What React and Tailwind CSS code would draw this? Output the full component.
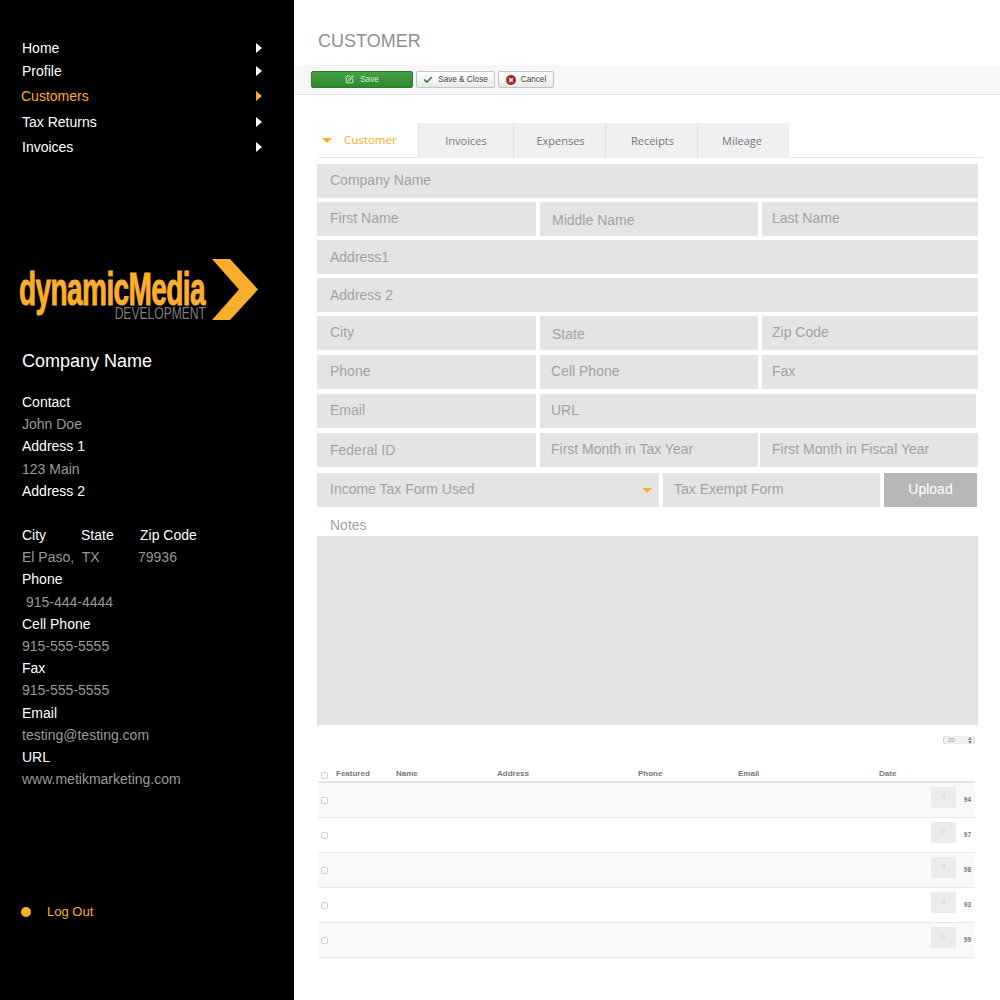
import { Check, SquarePen } from 'lucide-react'

const nav = [
  ['Home', 'mt-[36px]', 'text-white'],
  ['Profile', 'mt-[-1px]', 'text-white'],
  ['Customers', 'mt-[1px]', 'text-[#fbad2c]'],
  ['Tax Returns', 'mt-[2px]', 'text-white'],
  ['Invoices', 'mt-[1px]', 'text-white'],
]

const details = [
  ['Contact', 1], ['John Doe', 0], ['Address 1', 1], ['123 Main', 0], ['Address 2', 1],
]

const details2 = [
  ['Phone', 1], ['\u00a0915-444-4444', 0], ['Cell Phone', 1], ['915-555-5555', 0], ['Fax', 1],
  ['915-555-5555', 0], ['Email', 1], ['testing@testing.com', 0], ['URL', 1], ['www.metikmarketing.com', 0],
]

const tabs = [
  ['Invoices', 'w-[95px]'],
  ['Expenses', 'w-[92px] pl-[2px]'],
  ['Receipts', 'w-[92px] pl-[2px]'],
  ['Mileage', 'w-[92px] pr-[3px]'],
]

const rows = [94, 97, 98, 93, 99]

function Field({ label, className = '' }) {
  return (
    <div className={`h-[34px] bg-[#e4e4e4] text-[14px] text-[#a3a3a3] ${className}`}>
      {label}
    </div>
  )
}

function Caret({ className = '' }) {
  return <div className={`h-0 w-0 border-x-[5px] border-t-[5px] border-x-transparent border-t-[#fbab2d] ${className}`} />
}

function Box() {
  return <div className="h-[7px] w-[7px] rounded-[2px] border border-[#cfcfcf] bg-white" />
}

export default function App() {
  return (
    <div className="flex min-h-[1000px] bg-white font-['Liberation_Sans',sans-serif]">
      <aside className="flex h-[1000px] w-[294px] shrink-0 flex-col bg-black">
        <nav className="pl-[22px] pr-[32px]">
          {nav.map(([label, mt, color]) => (
            <div key={label} className={`flex h-[24px] items-center justify-between text-[14px] ${mt} ${color}`}>
              <span className={label === 'Customers' ? '-ml-[1px]' : ''}>{label}</span>
              <div className={`mt-[-1px] h-0 w-0 border-y-[5px] border-l-[6px] border-y-transparent ${label === 'Customers' ? 'border-l-[#fbad2c]' : 'border-l-white'}`} />
            </div>
          ))}
        </nav>

        <div className="mt-[100px] flex h-[70px] pl-[19px]">
          <div className="w-[187px]">
            <div className="h-[46px] origin-top-left scale-x-[0.61] whitespace-nowrap pt-[10px] text-[46px] font-bold leading-[40px] tracking-[-1px] text-[#fbad2c] [-webkit-text-stroke:1px_#fbad2c]">dynamicMedia</div>
            <div className="mt-[2px] text-right text-[16px] leading-[14px] text-[#7d7d7d]">
              <span className="inline-block origin-right scale-x-[0.755]">DEVELOPMENT</span>
            </div>
          </div>
          <svg width="46" height="62" viewBox="0 0 46 62" className="ml-[6px] shrink-0">
            <path d="M0 0H18L46 30.5 18 61H0L27 30.5Z" fill="#fbad2c" />
          </svg>
        </div>

        <div className="mt-[20px] pl-[22px] text-[18px] leading-[24px] text-white">Company Name</div>

        <div className="mt-[18px] pl-[22px] text-[14px] leading-[22.2px]">
          {details.map(([t, w]) => (
            <div key={t} className={w ? 'text-white' : 'text-[#999999]'}>{t}</div>
          ))}
          <div className="mt-[22px] flex text-white">
            <span className="w-[59px]">City</span>
            <span className="w-[59px]">State</span>
            <span>Zip Code</span>
          </div>
          <div className="flex text-[#999999]">
            <span className="w-[116px]">El Paso,&nbsp; TX</span>
            <span>79936</span>
          </div>
          {details2.map(([t, w], i) => (
            <div key={i} className={w ? 'text-white' : 'text-[#999999]'}>{t}</div>
          ))}
        </div>

        <div className="ml-[21px] mt-[112px] flex items-center text-[13px] leading-[20px] text-[#fbad2c]">
          <div className="h-[10px] w-[10px] rounded-full bg-[#fbad2c]" />
          <span className="ml-[16px]">Log Out</span>
        </div>
      </aside>

      <main className="min-w-0 flex-1">
        <h1 className="pl-[24px] pt-[30px] text-[18px] leading-[22px] text-[#8f8f8f]">CUSTOMER</h1>

        <div className="mt-[13px] flex h-[30px] items-start gap-[3px] border-b border-[#e6e6e6] bg-[#f7f7f7] pl-[17px] pt-[6px] text-[8.2px] leading-[15px] text-[#444444]">
          <div className="flex h-[17px] w-[102px] items-center justify-center gap-[6px] rounded-[2px] border border-[#2a7a2a] bg-gradient-to-b from-[#44a044] to-[#2e8a2e] text-[#d9ecd9]">
            <SquarePen size={9} strokeWidth={2.5} />
            <span>Save</span>
          </div>
          <div className="flex h-[17px] w-[79px] items-center justify-center gap-[5px] rounded-[2px] border border-[#c4c4c4] bg-gradient-to-b from-white to-[#e9e9e9]">
            <Check size={10} strokeWidth={4} className="text-[#2d862d]" />
            <span>Save &amp; Close</span>
          </div>
          <div className="flex h-[17px] w-[56px] items-center justify-center gap-[5px] rounded-[2px] border border-[#c4c4c4] bg-gradient-to-b from-white to-[#e9e9e9]">
            <svg width="10" height="10" viewBox="0 0 10 10">
              <circle cx="5" cy="5" r="5" fill="#a8232a" />
              <path d="M3.2 3.2L6.8 6.8M6.8 3.2L3.2 6.8" stroke="#fff" strokeWidth="1.4" />
            </svg>
            <span>Cancel</span>
          </div>
        </div>

        <div className="ml-[24px] mr-[17px] mt-[28px] flex h-[35px] border-b border-[#e6e6e6] font-['Open_Sans',sans-serif] text-[11px]">
          <div className="flex w-[100px] items-start pl-[4px] pt-[8px] text-[11.5px] text-[#fbab2d]">
            <Caret className="mt-[7px]" />
            <span className="ml-[12px] leading-[17px]">Customer</span>
          </div>
          {tabs.map(([t, w]) => (
            <div key={t} className={`flex h-[35px] items-center justify-center border-l border-[#dddee0] bg-[#eff0f2] pt-[2px] text-[#777777] ${w}`}>{t}</div>
          ))}
        </div>

        <div className="ml-[23px] mt-[6px] flex w-[661px] flex-col">
          <Field label="Company Name" className="pl-[13px] leading-[32px]" />
          <div className="mt-[4px] flex gap-[4px]">
            <Field label="First Name" className="w-[219px] pl-[13px] leading-[32px]" />
            <Field label="Middle Name" className="w-[218px] pl-[12px] leading-[36px]" />
            <Field label="Last Name" className="w-[216px] pl-[10px] leading-[32px]" />
          </div>
          <Field label="Address1" className="mt-[4px] pl-[13px] leading-[34px]" />
          <Field label="Address 2" className="mt-[4px] pl-[13px] leading-[34px]" />
          <div className="mt-[4px] flex gap-[4px]">
            <Field label="City" className="w-[219px] pl-[13px] leading-[32px]" />
            <Field label="State" className="w-[218px] pl-[12px] leading-[36px]" />
            <Field label="Zip Code" className="w-[216px] pl-[10px] leading-[32px]" />
          </div>
          <div className="mt-[5px] flex gap-[4px]">
            <Field label="Phone" className="w-[219px] pl-[13px] leading-[32px]" />
            <Field label="Cell Phone" className="w-[218px] pl-[11px] leading-[32px]" />
            <Field label="Fax" className="w-[216px] pl-[10px] leading-[32px]" />
          </div>
          <div className="mt-[5px] flex gap-[4px]">
            <Field label="Email" className="w-[219px] pl-[13px] leading-[32px]" />
            <Field label="URL" className="w-[436px] pl-[11px] leading-[32px]" />
          </div>
          <div className="mt-[5px] flex gap-[4px]">
            <Field label="Federal ID" className="w-[219px] pl-[13px] leading-[34px]" />
            <Field label="First Month in Tax Year" className="w-[218px] pl-[11px] leading-[32px]" />
            <Field label="First Month in Fiscal Year" className="ml-[-2px] w-[218px] pl-[12px] leading-[32px]" />
          </div>
          <div className="mt-[6px] flex gap-[4px]">
            <div className="flex h-[34px] w-[342px] justify-between bg-[#e4e4e4] pl-[13px] pr-[7px] text-[14px] leading-[32px] text-[#a3a3a3]">
              <span>Income Tax Form Used</span>
              <Caret className="mt-[15px]" />
            </div>
            <Field label="Tax Exempt Form" className="w-[217px] pl-[11px] leading-[32px]" />
            <div className="h-[34px] w-[93px] bg-[#b7b7b7] text-center text-[14px] leading-[32px] text-white">Upload</div>
          </div>
          <div className="mt-[10px] pl-[13px] text-[14px] leading-[16px] text-[#a3a3a3]">Notes</div>
          <div className="mt-[3px] h-[189px] border-2 border-[#e2e2e2] bg-[#e4e4e4]" />
        </div>

        <div className="ml-[649px] mt-[11px] flex h-[8px] w-[32px] items-center justify-between rounded-[3px] border-x border-[#c9c9c9] bg-[#efefef] px-[2px] text-[6px] leading-[8px] text-[#999999]">
          <span className="pl-[2px]">20</span>
          <svg width="4" height="7" viewBox="0 0 4 7" className="shrink-0">
            <path d="M2 0L4 3H0ZM0 4H4L2 7Z" fill="#888888" />
          </svg>
        </div>

        <div className="ml-[24px] mt-[24px] w-[657px] text-[8px] font-bold text-[#777777]">
          <div className="grid h-[15px] grid-cols-[18px_60px_101px_141px_100px_141px_1fr] items-center border-b-2 border-[#e6e6e6] pb-[2px]">
            <div className="pl-[3px] pt-[2px]"><Box /></div>
            <span>Featured</span>
            <span>Name</span>
            <span>Address</span>
            <span>Phone</span>
            <span>Email</span>
            <span>Date</span>
          </div>
          {rows.map((n, i) => (
            <div key={n} className={`flex h-[35px] items-center justify-between border-b border-[#e9e9e9] pl-[3px] pr-[4px] ${i % 2 === 0 ? 'bg-[#f9f9f9]' : 'bg-white'}`}>
              <div className="mt-[1px]"><Box /></div>
              <div className="flex items-center gap-[8px]">
                <div className="mb-[5px] flex h-[21px] w-[25px] items-center justify-center rounded-[1px] bg-[#ececee] text-[7px] font-normal text-[#d5d5d5]">0</div>
                <span className="text-[6.5px] text-[#777777]">{n}</span>
              </div>
            </div>
          ))}
        </div>
      </main>
    </div>
  )
}
